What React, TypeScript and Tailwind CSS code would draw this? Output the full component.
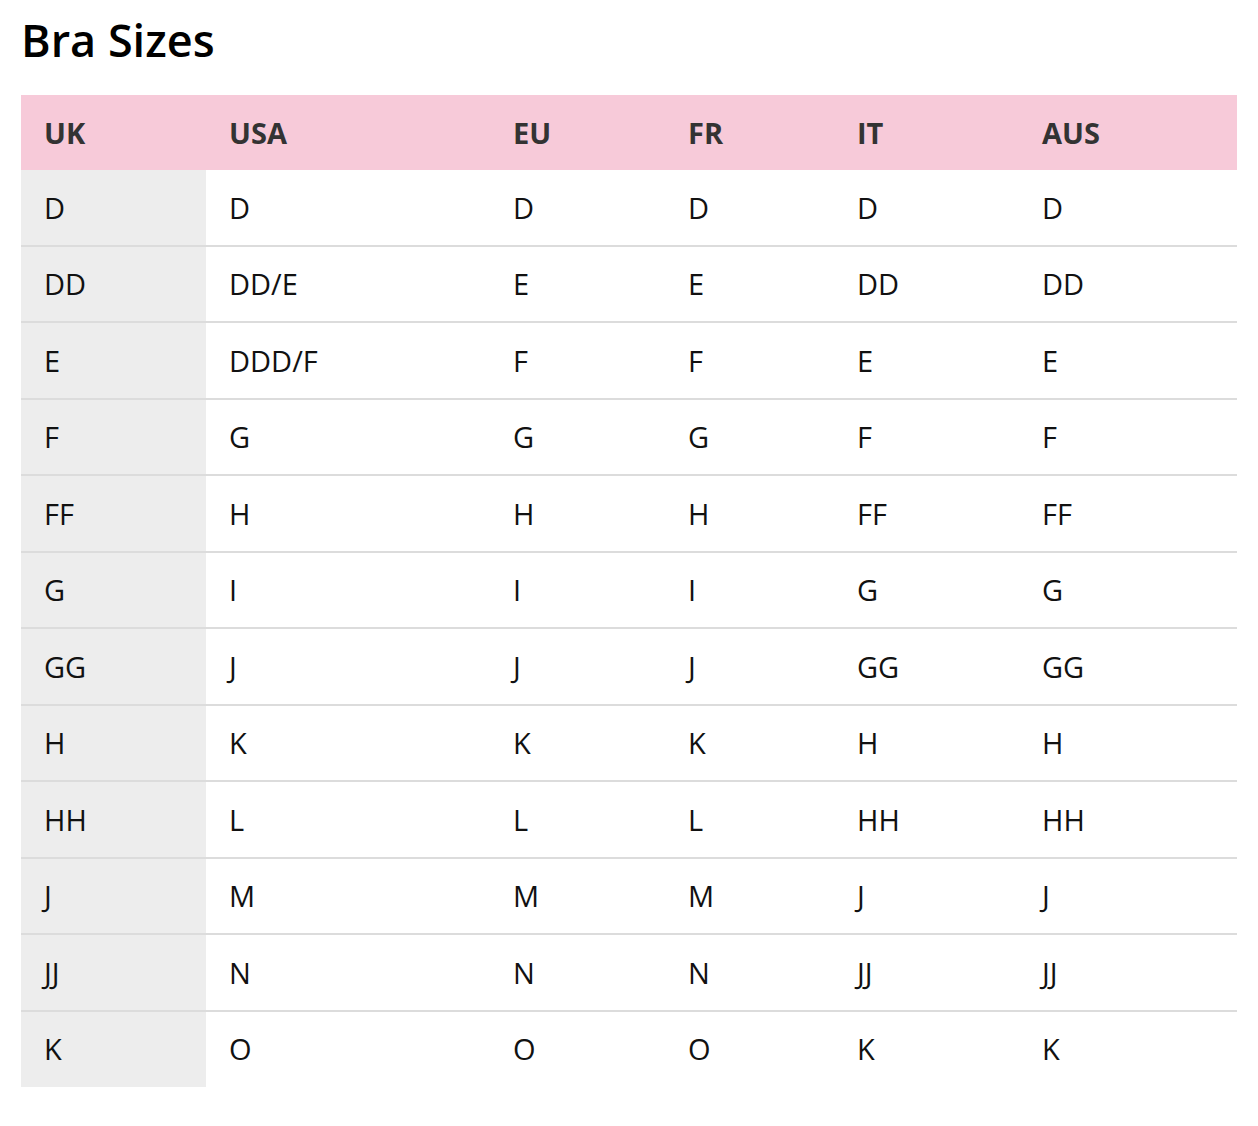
import React from "react";

const headers = ["UK", "USA", "EU", "FR", "IT", "AUS"];
const rows: string[][] = [
  ["D", "D", "D", "D", "D", "D"],
  ["DD", "DD/E", "E", "E", "DD", "DD"],
  ["E", "DDD/F", "F", "F", "E", "E"],
  ["F", "G", "G", "G", "F", "F"],
  ["FF", "H", "H", "H", "FF", "FF"],
  ["G", "I", "I", "I", "G", "G"],
  ["GG", "J", "J", "J", "GG", "GG"],
  ["H", "K", "K", "K", "H", "H"],
  ["HH", "L", "L", "L", "HH", "HH"],
  ["J", "M", "M", "M", "J", "J"],
  ["JJ", "N", "N", "N", "JJ", "JJ"],
  ["K", "O", "O", "O", "K", "K"],
];

const cols = "grid grid-cols-[185px_284px_175px_169px_185px_218px]";

export default function App() {
  return (
    <div
      className="min-h-[1126px] bg-white pl-[21px] pt-[17px]"
      style={{ fontFamily: '"Open Sans", "Noto Sans", sans-serif' }}
    >
      <h1 className="text-[45px] leading-[45px] font-semibold text-black">Bra Sizes</h1>
      <div className="mt-[33px] w-[1216px]">
        <div className={`${cols} h-[75px] bg-[#f7cad9]`}>
          {headers.map((h) => (
            <div key={h} className="flex items-center pl-[23px] text-[29px] font-bold text-[#333333]">
              {h}
            </div>
          ))}
        </div>
        {rows.map((r, i) => (
          <div
            key={i}
            className={`${cols} ${i < rows.length - 1 ? "h-[76.5px] border-b-2 border-[#dcdcdc]" : "h-[75px]"}`}
          >
            {r.map((c, j) => (
              <div
                key={j}
                className={`flex items-center pl-[23px] text-[29px] text-[#111111] ${j === 0 ? "bg-[#ededed]" : ""}`}
              >
                {c}
              </div>
            ))}
          </div>
        ))}
      </div>
    </div>
  );
}
